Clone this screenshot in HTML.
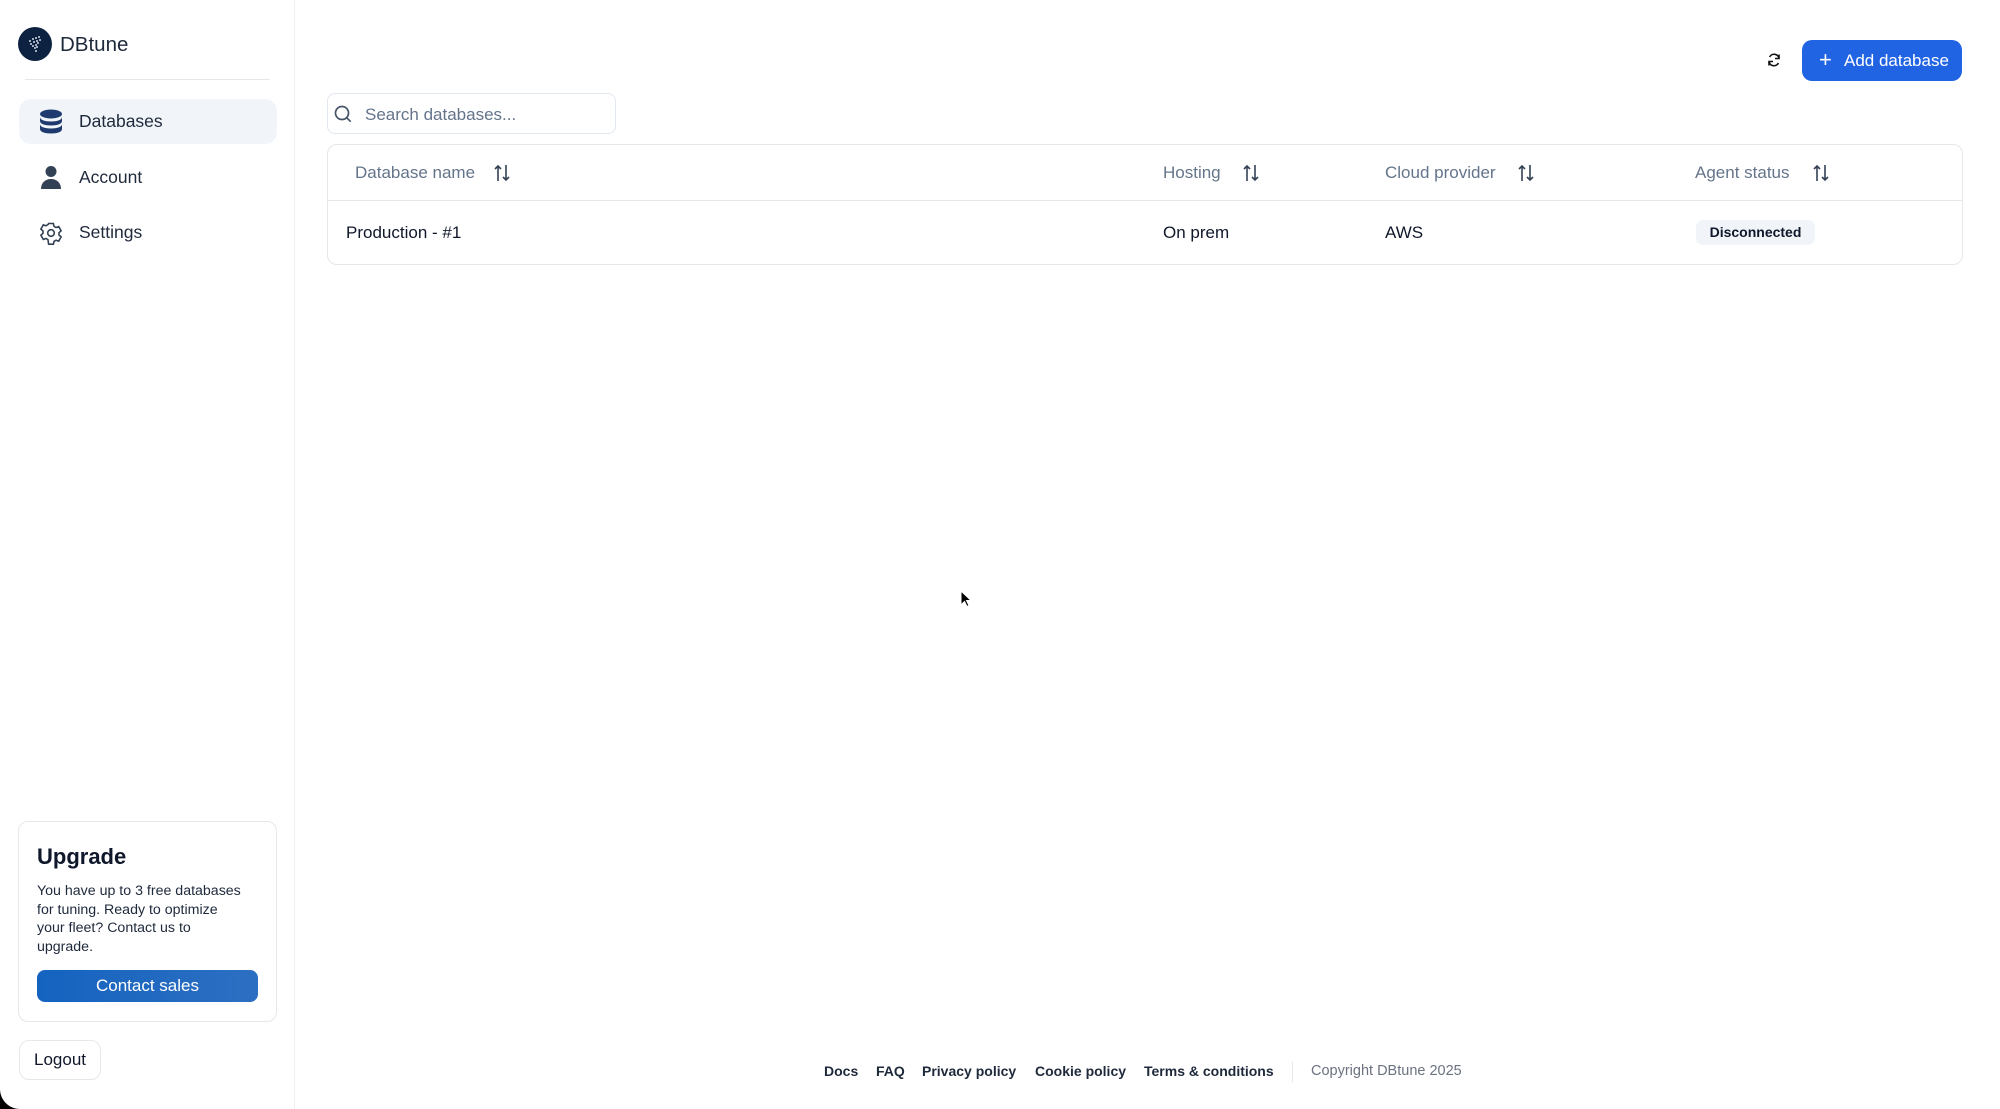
<!DOCTYPE html>
<html><head><meta charset="utf-8"><style>
*{box-sizing:border-box;margin:0;padding:0}
body{width:2000px;height:1109px;background:#fff;font-family:"Liberation Sans",sans-serif;position:relative;overflow:hidden;color:#0f172a}
.abs{position:absolute}
.side{left:0;top:0;width:295px;height:1109px;border-right:1px solid #eef0f3}
.nav{left:19px;width:258px;height:45px;border-radius:12px;display:flex;align-items:center;font-size:17.5px;color:#1e293b}
.nav svg{position:absolute;left:20px}
.nav span{position:absolute;left:60px}
.th{top:163px;font-size:17px;color:#64748b}
.td{top:223px;font-size:17px;color:#0f172a}
.foot{top:1063px;font-size:14px;font-weight:bold;color:#1e293b}
.sort{top:164px}
</style></head><body>
<div class="abs side"></div>
<svg class="abs" style="left:18px;top:27px" width="34" height="34" viewBox="0 0 34 34"><circle cx="17" cy="17" r="17" fill="#0d2240"/><g fill="#cfd8e6"><circle cx="12" cy="14" r="1"/><circle cx="15" cy="12" r="1"/><circle cx="18" cy="11" r="1"/><circle cx="21" cy="10" r="1"/><circle cx="13" cy="17" r="1"/><circle cx="16" cy="15" r="1"/><circle cx="19" cy="14" r="1"/><circle cx="22" cy="13" r="1"/><circle cx="15" cy="19" r="1"/><circle cx="18" cy="18" r="1"/><circle cx="20" cy="16" r="1"/><circle cx="17" cy="21" r="1"/><circle cx="19" cy="20" r="1"/><circle cx="18" cy="24" r="1"/></g></svg>
<div class="abs" style="left:60px;top:33px;font-size:20.5px;color:#1e293b">DBtune</div>
<div class="abs" style="left:25px;top:79px;width:245px;height:1px;background:#e5e7eb"></div>
<div class="abs nav" style="top:99px;background:#f1f5f9">
<svg width="24" height="26" viewBox="0 0 24 26"><ellipse cx="12" cy="5" rx="11" ry="4.5" fill="#1e3a6e"/><path d="M1 8c0 3 5 4.5 11 4.5S23 11 23 8v4c0 3-5 4.5-11 4.5S1 15 1 12z" fill="#1e3a6e"/><path d="M1 15c0 3 5 4.5 11 4.5S23 18 23 15v5c0 3-5 4.5-11 4.5S1 23 1 20z" fill="#1e3a6e"/></svg><span>Databases</span></div>
<div class="abs nav" style="top:155px">
<svg width="24" height="26" viewBox="0 0 24 26"><circle cx="12" cy="6.5" r="5.5" fill="#334155"/><path d="M2 24c0-6 4-10 10-10s10 4 10 10z" fill="#334155"/></svg><span>Account</span></div>
<div class="abs nav" style="top:210px">
<svg width="24" height="24" viewBox="0 0 24 24" fill="none" stroke="#334155" stroke-width="1.6"><path d="M9.6 2.5h4.8l.6 2.8 2 1.2 2.7-.9 2.4 4.2-2.1 1.9v2.3l2.1 1.9-2.4 4.2-2.7-.9-2 1.2-.6 2.8H9.6L9 18.7l-2-1.2-2.7.9-2.4-4.2 2.1-1.9V10l-2.1-1.9 2.4-4.2 2.7.9 2-1.2z"/><circle cx="12" cy="12" r="3.3"/></svg><span>Settings</span></div>

<div class="abs" style="left:18px;top:821px;width:259px;height:201px;border:1px solid #e5e7eb;border-radius:10px"></div>
<div class="abs" style="left:37px;top:844px;font-size:22px;font-weight:bold;color:#0f172a">Upgrade</div>
<div class="abs" style="left:37px;top:882px;width:240px;font-size:14.2px;line-height:18.6px;color:#1e293b;white-space:nowrap">You have up to 3 free databases<br>for tuning. Ready to optimize<br>your fleet? Contact us to<br>upgrade.</div>
<div class="abs" style="left:37px;top:970px;width:221px;height:32px;border-radius:8px;background:linear-gradient(90deg,#1463bf,#2d6fc2);color:#fff;font-size:17px;text-align:center;line-height:32px">Contact sales</div>
<div class="abs" style="left:19px;top:1040px;width:82px;height:40px;border:1px solid #e5e7eb;border-radius:10px;font-size:17px;text-align:center;line-height:38px;color:#0f172a">Logout</div>
<svg class="abs" style="left:0;top:1089px" width="20" height="20" viewBox="0 0 20 20"><path d="M0 0C0 11 9 20 20 20H0z" fill="#000"/></svg>

<svg class="abs" style="left:1766px;top:52px" width="16" height="16" viewBox="0 0 16 16" fill="none" stroke="#111" stroke-width="1.6"><path d="M13 6.5A5 5 0 0 0 3.6 5M3 9.5A5 5 0 0 0 12.4 11"/><path d="M13 2.5v4h-4M3 13.5v-4h4"/></svg>
<div class="abs" style="left:1802px;top:40px;width:160px;height:41px;border-radius:10px;background:#2063e3;color:#fff;font-size:17px;line-height:41px"><span style="position:absolute;left:17px;font-size:22px;top:-1px">+</span><span style="position:absolute;left:42px">Add database</span></div>

<div class="abs" style="left:327px;top:93px;width:289px;height:41px;border:1px solid #e2e8f0;border-radius:8px"></div>
<svg class="abs" style="left:333px;top:104px" width="20" height="20" viewBox="0 0 20 20" fill="none" stroke="#475569" stroke-width="1.7"><circle cx="9" cy="9" r="6.5"/><path d="M13.7 13.7l4 4"/></svg>
<div class="abs" style="left:365px;top:105px;font-size:17px;color:#64748b">Search databases...</div>

<div class="abs" style="left:327px;top:144px;width:1636px;height:121px;border:1px solid #e5e7eb;border-radius:10px"></div>
<div class="abs" style="left:328px;top:200px;width:1634px;height:1px;background:#e5e7eb"></div>
<div class="abs th" style="left:355px">Database name</div>
<div class="abs th" style="left:1163px">Hosting</div>
<div class="abs th" style="left:1385px">Cloud provider</div>
<div class="abs th" style="left:1695px">Agent status</div>
<svg width="0" height="0" style="position:absolute"><defs><g id="s" fill="none" stroke="#334155" stroke-width="1.6"><path d="M4 17V2M1 5l3-3 3 3M12 1v15M9 13l3 3 3-3"/></g></defs></svg>
<svg class="abs sort" style="left:494px" width="16" height="18"><use href="#s"/></svg>
<svg class="abs sort" style="left:1243px" width="16" height="18"><use href="#s"/></svg>
<svg class="abs sort" style="left:1518px" width="16" height="18"><use href="#s"/></svg>
<svg class="abs sort" style="left:1813px" width="16" height="18"><use href="#s"/></svg>
<div class="abs td" style="left:346px">Production - #1</div>
<div class="abs td" style="left:1163px">On prem</div>
<div class="abs td" style="left:1385px">AWS</div>
<div class="abs" style="left:1696px;top:220px;width:119px;height:25px;border-radius:7px;background:#f1f5f9;font-size:14px;font-weight:bold;text-align:center;line-height:25px;color:#0f172a">Disconnected</div>

<svg class="abs" style="left:960px;top:590px" width="12" height="18" viewBox="0 0 12 18"><path d="M1 1v14l3.5-3.5 2.5 5 2-1-2.5-5H11z" fill="#000" stroke="#fff" stroke-width="1"/></svg>

<div class="abs foot" style="left:824px">Docs</div>
<div class="abs foot" style="left:876px">FAQ</div>
<div class="abs foot" style="left:922px">Privacy policy</div>
<div class="abs foot" style="left:1035px">Cookie policy</div>
<div class="abs foot" style="left:1144px">Terms &amp; conditions</div>
<div class="abs" style="left:1292px;top:1062px;width:1px;height:20px;background:#e5e7eb"></div>
<div class="abs foot" style="left:1311px;font-weight:normal;color:#6b7280;font-size:14.5px">Copyright DBtune 2025</div>
</body></html>
